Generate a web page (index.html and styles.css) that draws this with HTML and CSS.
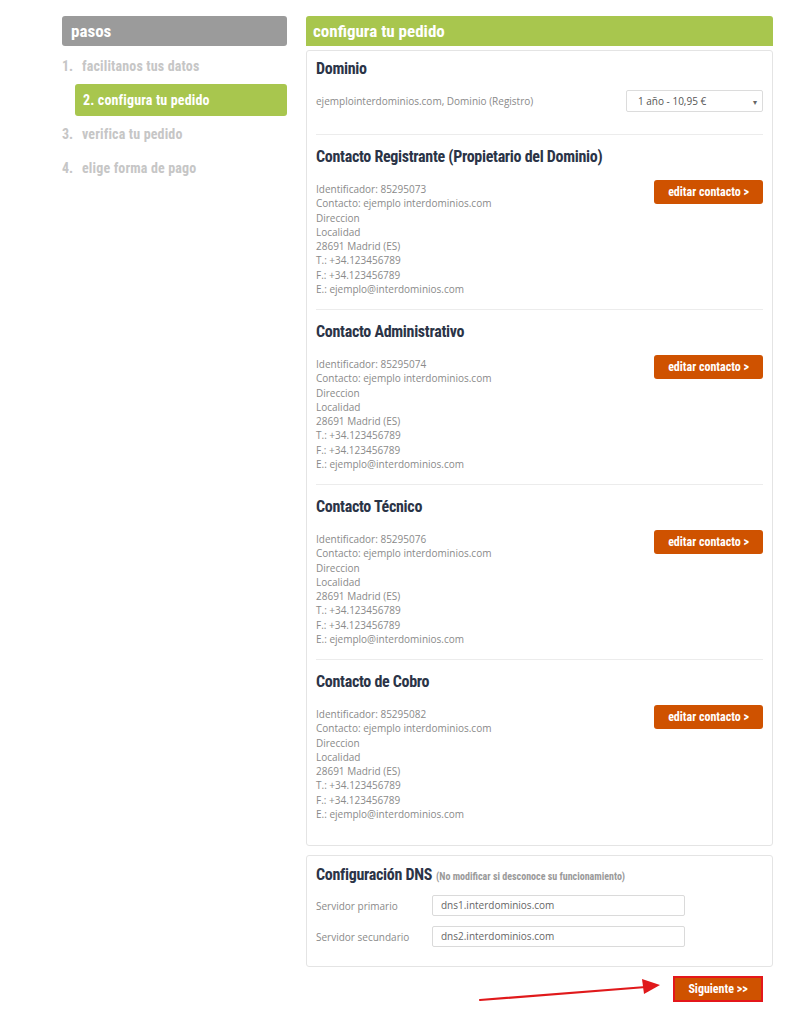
FILE: index.html
```html
<!DOCTYPE html>
<html lang="es">
<head>
<meta charset="utf-8">
<title>configura tu pedido</title>
<link rel="stylesheet" href="styles.css">
</head>
<body>
<div class="page">
  <aside class="sidebar">
    <div class="side-head"><span class="cond">pasos</span></div>
    <ol class="steps">
      <li class="step"><span class="num">1.</span><span class="cond">facilitanos tus datos</span></li>
      <li class="step active"><span class="cond">2. configura tu pedido</span></li>
      <li class="step"><span class="num">3.</span><span class="cond">verifica tu pedido</span></li>
      <li class="step"><span class="num">4.</span><span class="cond">elige forma de pago</span></li>
    </ol>
  </aside>
  <main class="main">
    <div class="main-head"><span class="cond">configura tu pedido</span></div>
    <div class="panel">
      <section class="sec sec-domain">
        <h3 class="title"><span class="cond">Dominio</span></h3>
        <div class="domain-row">
          <span class="txt">ejemplointerdominios.com, Dominio (Registro)</span>
          <div class="select"><span>1 año - 10,95 €</span><span class="caret">▾</span></div>
        </div>
      </section>
      <section class="sec">
        <h3 class="title"><span class="cond">Contacto Registrante (Propietario del Dominio)</span></h3>
        <div class="contact">
          <div class="lines">
            <div>Identificador: 85295073</div>
            <div>Contacto: ejemplo interdominios.com</div>
            <div>Direccion</div>
            <div>Localidad</div>
            <div>28691 Madrid (ES)</div>
            <div>T.: +34.123456789</div>
            <div>F.: +34.123456789</div>
            <div>E.: ejemplo@interdominios.com</div>
          </div>
          <a class="btn"><span class="cond">editar contacto &gt;</span></a>
        </div>
      </section>
      <section class="sec">
        <h3 class="title"><span class="cond">Contacto Administrativo</span></h3>
        <div class="contact">
          <div class="lines">
            <div>Identificador: 85295074</div>
            <div>Contacto: ejemplo interdominios.com</div>
            <div>Direccion</div>
            <div>Localidad</div>
            <div>28691 Madrid (ES)</div>
            <div>T.: +34.123456789</div>
            <div>F.: +34.123456789</div>
            <div>E.: ejemplo@interdominios.com</div>
          </div>
          <a class="btn"><span class="cond">editar contacto &gt;</span></a>
        </div>
      </section>
      <section class="sec">
        <h3 class="title"><span class="cond">Contacto Técnico</span></h3>
        <div class="contact">
          <div class="lines">
            <div>Identificador: 85295076</div>
            <div>Contacto: ejemplo interdominios.com</div>
            <div>Direccion</div>
            <div>Localidad</div>
            <div>28691 Madrid (ES)</div>
            <div>T.: +34.123456789</div>
            <div>F.: +34.123456789</div>
            <div>E.: ejemplo@interdominios.com</div>
          </div>
          <a class="btn"><span class="cond">editar contacto &gt;</span></a>
        </div>
      </section>
      <section class="sec sec-last">
        <h3 class="title"><span class="cond">Contacto de Cobro</span></h3>
        <div class="contact">
          <div class="lines">
            <div>Identificador: 85295082</div>
            <div>Contacto: ejemplo interdominios.com</div>
            <div>Direccion</div>
            <div>Localidad</div>
            <div>28691 Madrid (ES)</div>
            <div>T.: +34.123456789</div>
            <div>F.: +34.123456789</div>
            <div>E.: ejemplo@interdominios.com</div>
          </div>
          <a class="btn"><span class="cond">editar contacto &gt;</span></a>
        </div>
      </section>
    </div>
    <div class="panel panel-dns">
      <h3 class="title"><span class="cond">Configuración DNS</span><span class="cond note">(No modificar si desconoce su funcionamiento)</span></h3>
      <div class="dns-row first"><span class="label">Servidor primario</span><div class="input">dns1.interdominios.com</div></div>
      <div class="dns-row"><span class="label">Servidor secundario</span><div class="input">dns2.interdominios.com</div></div>
    </div>
    <div class="actions">
      <a class="btn btn-next"><span class="cond">Siguiente &gt;&gt;</span></a>
    </div>
  </main>
</div>
<svg class="arrow" width="200" height="30" viewBox="0 0 200 30" aria-hidden="true">
  <line x1="2" y1="25" x2="168" y2="12" stroke="#e0191b" stroke-width="2.2" stroke-linecap="round"/>
  <polygon points="182,10 164,4 166,19" fill="#e0191b"/>
</svg>
</body>
</html>
```
FILE: styles.css
```css
* { box-sizing: border-box; }
html, body { margin: 0; padding: 0; background: #fff; }
body {
  font-family: "Open Sans", "DejaVu Sans", sans-serif;
  color: #8a8a8a;
  width: 796px;
  height: 1024px;
  position: relative;
  overflow: hidden;
}
.cond {
  font-family: "Roboto Condensed", "Open Sans", sans-serif;
  font-stretch: 75%;
  font-weight: bold;
  white-space: nowrap;
}
.page {
  display: flex;
  gap: 19px;
  padding: 16px 0 0 62px;
}
.sidebar { width: 225px; flex: none; }
.side-head {
  height: 30px;
  background: #9b9b9b;
  border-radius: 3px;
  color: #fff;
  font-size: 17px;
  display: flex;
  align-items: center;
  padding-left: 9px;
}
.steps { list-style: none; margin: 3px 0 0; padding: 0; }
.step {
  height: 34px;
  display: flex;
  align-items: center;
  color: #c6c6c6;
  font-size: 14px;
}
.step .num {
  width: 20px;
  font-family: "Roboto Condensed", "Open Sans", sans-serif;
  font-stretch: 75%;
  font-weight: bold;
}
.step .cond { letter-spacing: 0.15px; }
.step.active {
  height: 32px;
  margin: 1px 0 1px 13px;
  background: #a8c64e;
  border-radius: 3px;
  color: #fff;
  padding-left: 8px;
}
.main { width: 467px; flex: none; }
.main-head {
  height: 30px;
  background: #a8c64e;
  border-radius: 3px 3px 0 0;
  color: #fff;
  font-size: 17px;
  display: flex;
  align-items: center;
  padding-left: 7px;
}
.panel {
  margin-top: 4px;
  border: 1px solid #e4e4e4;
  border-radius: 3px;
  padding: 0 9px 11px;
}
.title {
  margin: 0;
  display: flex;
  align-items: baseline;
  gap: 4px;
  height: 22px;
  font-size: 16px;
  line-height: 22px;
  font-weight: normal;
  color: #2b3447;
  white-space: nowrap;
}
.title .cond { letter-spacing: -0.3px; }
.sec { border-top: 1px solid #ececec; padding: 11px 0 13px; }
.sec-domain { border-top: 0; padding: 7px 0 22px; }
.domain-row {
  margin-top: 10px;
  display: flex;
  justify-content: space-between;
  align-items: center;
  font-size: 10px;
}
.select {
  width: 137px;
  height: 22px;
  border: 1px solid #dcdcdc;
  border-radius: 2px;
  display: flex;
  align-items: center;
  justify-content: space-between;
  padding: 0 5px 0 11px;
  color: #555;
  font-size: 10px;
}
.caret { font-size: 8px; color: #666; }
.contact {
  margin-top: 14px;
  display: flex;
  justify-content: space-between;
  align-items: flex-start;
}
.lines { font-size: 10px; line-height: 14.25px; }
.btn {
  display: flex;
  align-items: center;
  justify-content: center;
  width: 109px;
  height: 24px;
  margin-top: -2px;
  background: #cf5200;
  border-radius: 3px;
  color: #fff;
  font-size: 12px;
  text-decoration: none;
}
.panel-dns { margin-top: 9px; padding: 8px 9px 19px; }
.title .note { font-size: 10px; color: #9a9a9a; letter-spacing: 0; }
.dns-row {
  display: flex;
  align-items: center;
  margin-top: 10px;
  font-size: 10px;
}
.dns-row.first { margin-top: 9px; }
.label { width: 116px; flex: none; }
.input {
  width: 253px;
  height: 21px;
  border: 1px solid #dadada;
  border-radius: 2px;
  padding-left: 8px;
  line-height: 19px;
  color: #666;
  font-size: 10px;
}
.actions { display: flex; justify-content: flex-end; padding: 9px 10px 0 0; }
.btn-next {
  width: 90px;
  height: 26px;
  margin: 0;
  border: 2px solid #e4171b;
  border-radius: 0;
  background: #cf5200;
  font-size: 12px;
}
.arrow { position: absolute; left: 478px; top: 975px; }
```
